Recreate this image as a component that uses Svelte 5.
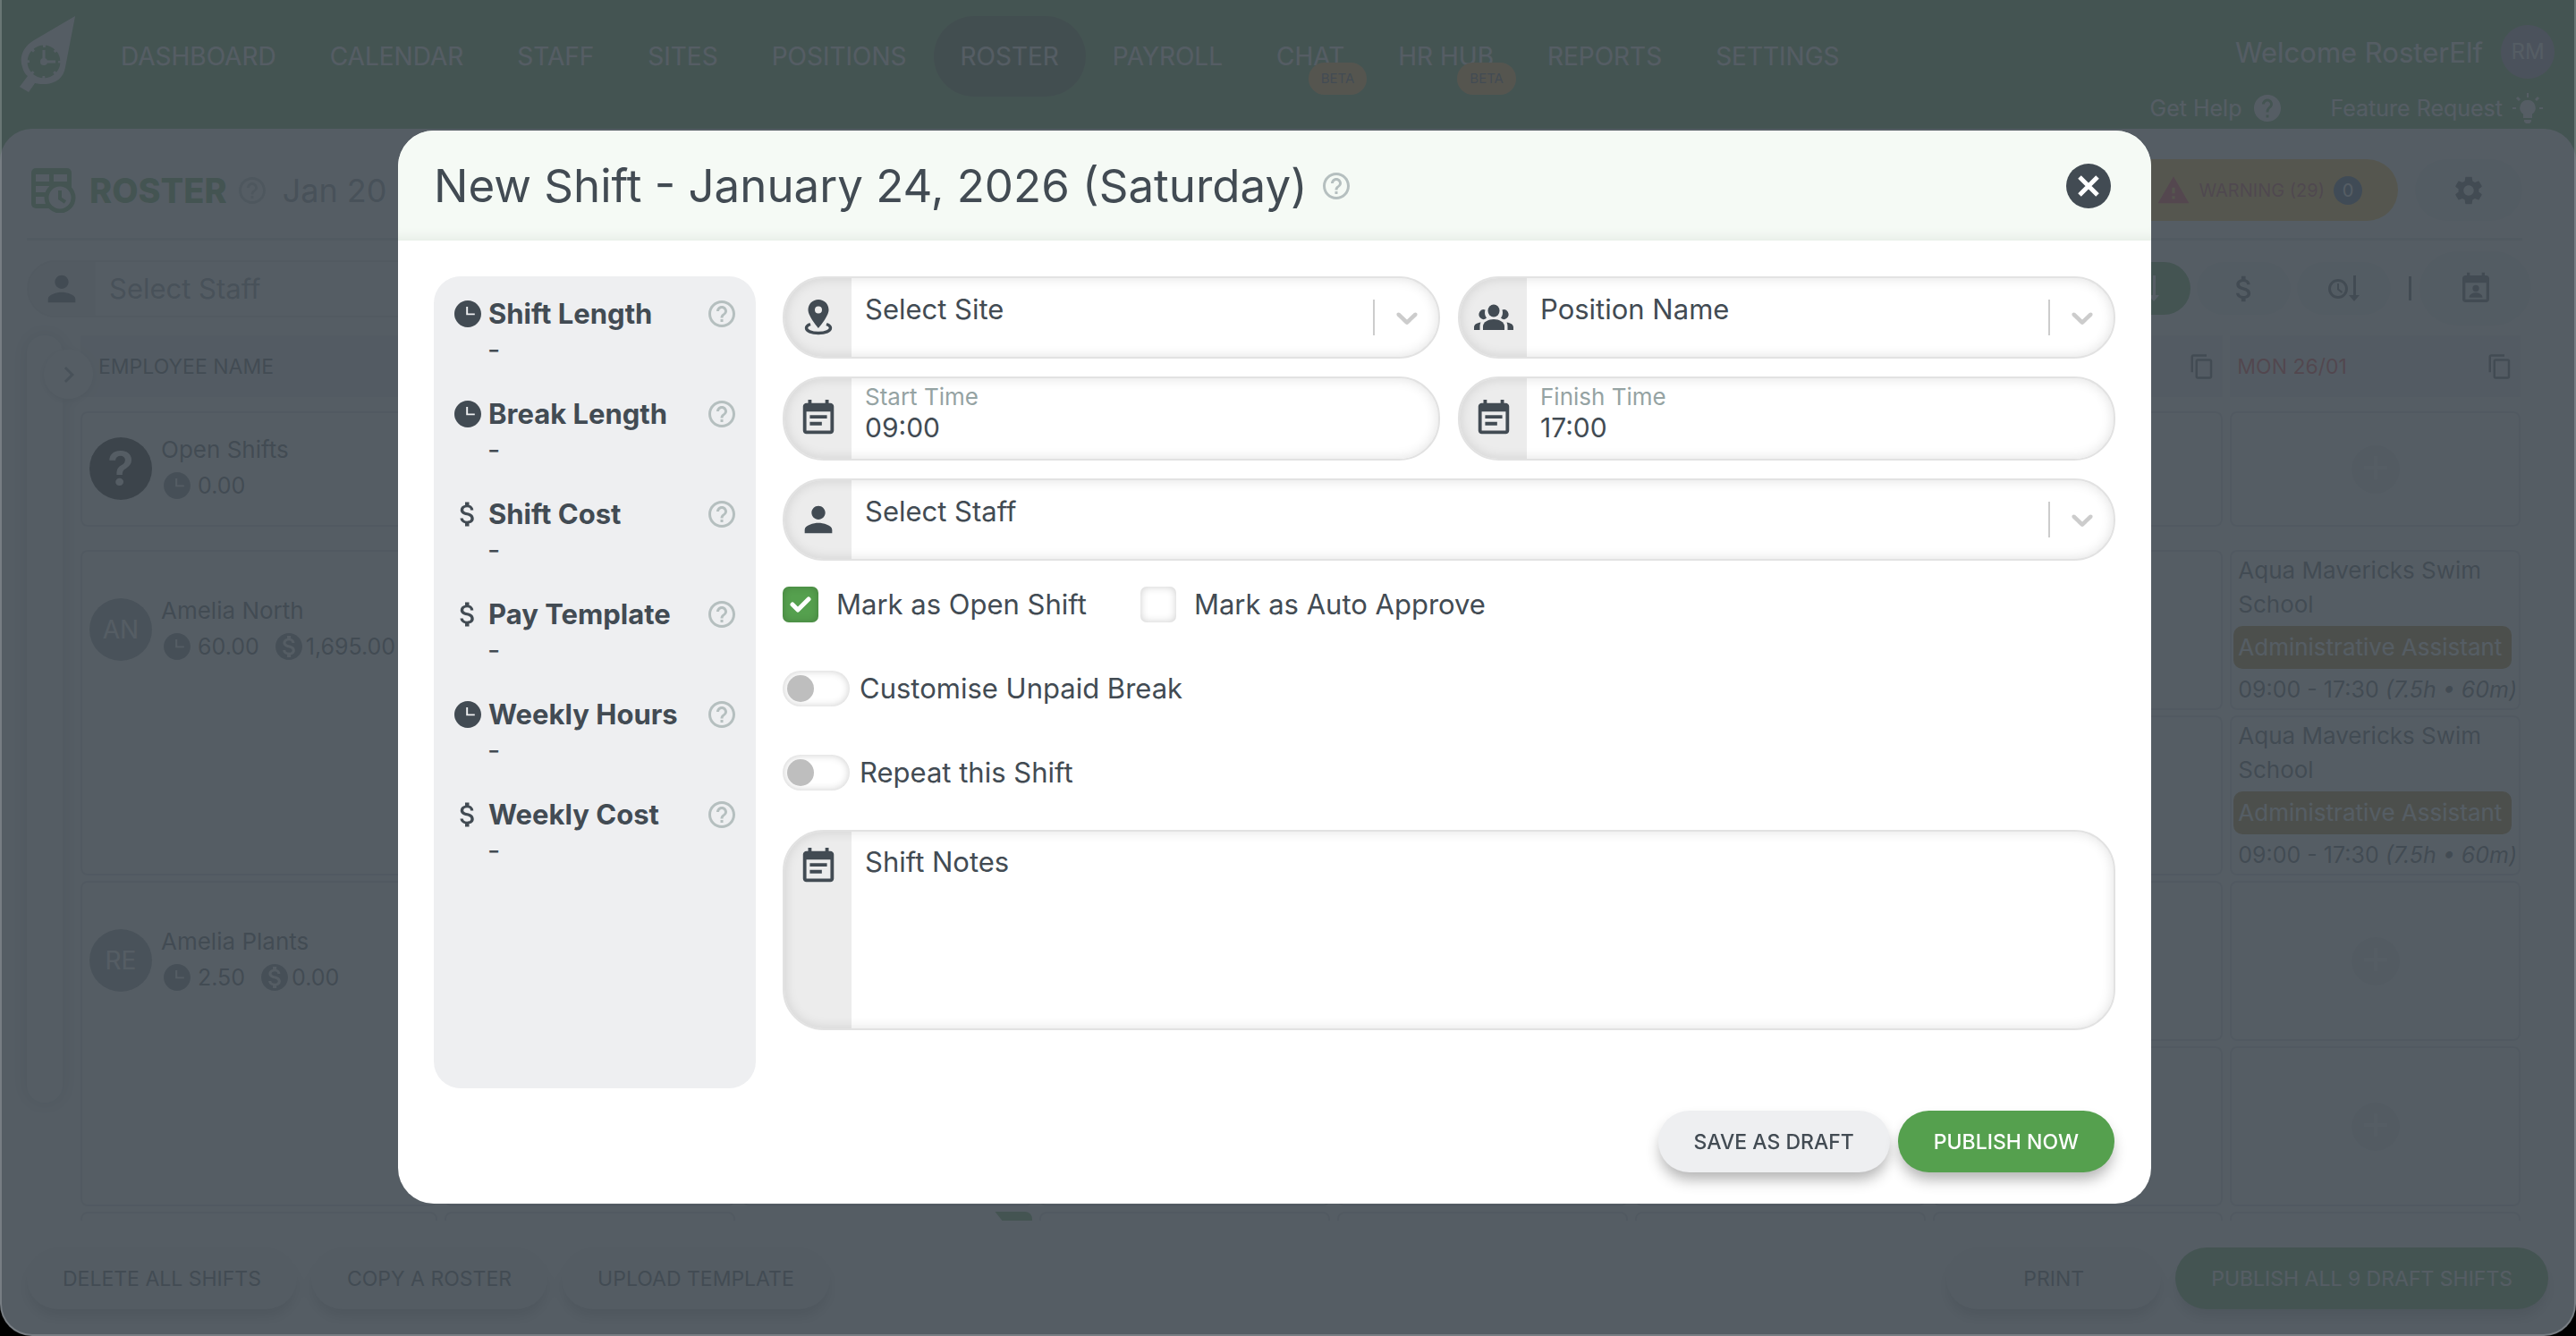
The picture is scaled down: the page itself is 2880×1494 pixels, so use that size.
<script>
  const icons = {
    help: "M11 18h2v-2h-2v2zm1-16C6.48 2 2 6.48 2 12s4.48 10 10 10 10-4.48 10-10S17.52 2 12 2zm0 18c-4.41 0-8-3.59-8-8s3.59-8 8-8 8 3.59 8 8-3.59 8-8 8zm0-14c-2.21 0-4 1.79-4 4h2c0-1.1.9-2 2-2s2 .9 2 2c0 2-3 1.75-3 5h2c0-2.25 3-2.5 3-5 0-2.21-1.79-4-4-4z",
    helpFilled: "M12 2C6.48 2 2 6.48 2 12s4.48 10 10 10 10-4.48 10-10S17.52 2 12 2zm1 17h-2v-2h2v2zm2.07-7.75l-.9.92C13.45 12.9 13 13.5 13 15h-2v-.5c0-1.1.45-2.1 1.17-2.83l1.24-1.26c.37-.36.59-.86.59-1.41 0-1.1-.9-2-2-2s-2 .9-2 2H8c0-2.21 1.79-4 4-4s4 1.79 4 4c0 .88-.36 1.68-.93 2.25z",
    clock: "M12 2C6.5 2 2 6.5 2 12s4.5 10 10 10 10-4.5 10-10S17.5 2 12 2zm5.2 10.9h-6.4V6.7h1.3v4.9h5.1z",
    dollar: "M11.8 10.9c-2.27-.59-3-1.2-3-2.15 0-1.09 1.01-1.85 2.7-1.85 1.78 0 2.44.85 2.5 2.1h2.21c-.07-1.72-1.12-3.3-3.21-3.81V3h-3v2.16c-1.94.42-3.5 1.68-3.5 3.61 0 2.31 1.91 3.46 4.7 4.13 2.5.6 3 1.48 3 2.41 0 .69-.49 1.79-2.7 1.79-2.06 0-2.87-.92-2.98-2.1h-2.2c.12 2.19 1.76 3.42 3.68 3.83V21h3v-2.15c1.95-.37 3.5-1.5 3.5-3.55 0-2.84-2.43-3.81-4.7-4.4z",
    money: "M12 2C6.48 2 2 6.48 2 12s4.48 10 10 10 10-4.48 10-10S17.52 2 12 2zm1.41 16.09V20h-2.67v-1.93c-1.71-.36-3.16-1.46-3.27-3.4h1.96c.1 1.05.82 1.87 2.65 1.87 1.96 0 2.4-.98 2.4-1.59 0-.83-.44-1.61-2.67-2.14-2.48-.6-4.18-1.62-4.18-3.67 0-1.72 1.39-2.84 3.11-3.21V4h2.67v1.95c1.86.45 2.79 1.86 2.85 3.39H14.3c-.05-1.11-.64-1.87-2.22-1.87-1.5 0-2.4.68-2.4 1.64 0 .84.65 1.39 2.67 1.91s4.18 1.39 4.18 3.91c-.01 1.83-1.38 2.83-3.12 3.16z",
    person: "M12 12c2.21 0 4-1.79 4-4s-1.79-4-4-4-4 1.79-4 4 1.79 4 4 4zm0 2c-2.67 0-8 1.34-8 4v2h16v-2c0-2.66-5.33-4-8-4z",
    note: "M17 10H7v2h10v-2zm2-7h-1V1h-2v2H8V1H6v2H5c-1.11 0-1.99.9-1.99 2L3 19c0 1.1.89 2 2 2h14c1.1 0 2-.9 2-2V5c0-1.1-.9-2-2-2zm0 16H5V8h14v11zm-5-5H7v2h7v-2z",
    contact: "M19 3h-1V1h-2v2H8V1H6v2H5c-1.11 0-2 .9-2 2v14c0 1.1.89 2 2 2h14c1.1 0 2-.9 2-2V5c0-1.1-.9-2-2-2zm0 16H5V8h14v11zM12 9.5a2.2 2.2 0 1 0 0 4.4 2.2 2.2 0 0 0 0-4.4zM7.5 17.8c0-2 2.4-3.2 4.5-3.2s4.5 1.2 4.5 3.2z",
    gear: "M19.14 12.94c.04-.3.06-.61.06-.94 0-.32-.02-.64-.07-.94l2.03-1.58c.18-.14.23-.41.12-.61l-1.92-3.32c-.12-.22-.37-.29-.59-.22l-2.39.96c-.5-.38-1.03-.7-1.62-.94l-.36-2.54c-.04-.24-.24-.41-.48-.41h-3.84c-.24 0-.43.17-.47.41l-.36 2.54c-.59.24-1.13.57-1.62.94l-2.39-.96c-.22-.08-.47 0-.59.22L2.74 8.87c-.12.21-.08.47.12.61l2.03 1.58c-.05.3-.09.63-.09.94s.02.64.07.94l-2.03 1.58c-.18.14-.23.41-.12.61l1.92 3.32c.12.22.37.29.59.22l2.39-.96c.5.38 1.03.7 1.62.94l.36 2.54c.05.24.24.41.48.41h3.84c.24 0 .44-.17.47-.41l.36-2.54c.59-.24 1.13-.56 1.62-.94l2.39.96c.22.08.47 0 .59-.22l1.92-3.32c.12-.22.07-.47-.12-.61l-2.01-1.58zM12 15.6c-1.98 0-3.6-1.62-3.6-3.6s1.62-3.6 3.6-3.6 3.6 1.62 3.6 3.6-1.62 3.6-3.6 3.6z",
    copy: "M16 1H4c-1.1 0-2 .9-2 2v14h2V3h12V1zm3 4H8c-1.1 0-2 .9-2 2v14c0 1.1.9 2 2 2h11c1.1 0 2-.9 2-2V7c0-1.1-.9-2-2-2zm0 16H8V7h11v14z",
    warning: "M1 21h22L12 2 1 21zm12-3h-2v-2h2v2zm0-4h-2v-4h2v4z",
    chevronRight: "M10 6L8.6 7.4 13.2 12l-4.6 4.6L10 18l6-6z",
  };

  const nav = [
    { label: "DASHBOARD" },
    { label: "CALENDAR" },
    { label: "STAFF" },
    { label: "SITES" },
    { label: "POSITIONS" },
    { label: "ROSTER", active: true },
    { label: "PAYROLL" },
    { label: "CHAT", beta: true },
    { label: "HR HUB", beta: true },
    { label: "REPORTS" },
    { label: "SETTINGS" },
  ];

  const days = ["", "", "", "", "", "", "MON 26/01"];

  const shift = {
    site: "Aqua Mavericks Swim School",
    position: "Administrative Assistant",
    time: "09:00 - 17:30",
    detail: "(7.5h • 60m)",
  };

  const staff = [
    { initials: "AN", name: "Amelia North", hours: "60.00", cost: "1,695.00", cells: [shift, shift] },
    { initials: "RE", name: "Amelia Plants", hours: "2.50", cost: "0.00", cells: [null, null] },
  ];

  const summary = [
    { icon: "clock", label: "Shift Length" },
    { icon: "clock", label: "Break Length" },
    { icon: "dollar", label: "Shift Cost" },
    { icon: "dollar", label: "Pay Template" },
    { icon: "clock", label: "Weekly Hours" },
    { icon: "dollar", label: "Weekly Cost" },
  ];

  let open = true;
  let startTime = "09:00";
  let finishTime = "17:00";
  let openShift = true;
  let autoApprove = false;
  let customBreak = false;
  let repeatShift = false;
  let notes = "";

  const close = () => {
    open = false;
  };
</script>

{#snippet icon(name, size)}
  <svg class="icon" width={size} height={size} viewBox="0 0 24 24" aria-hidden="true">
    <path d={icons[name]} />
  </svg>
{/snippet}

{#snippet indicator()}
  <span class="indicator">
    <svg width="40" height="40" viewBox="0 0 20 20" aria-hidden="true">
      <path d="M4.516 7.548c.436-.446 1.043-.481 1.576 0l3.908 3.747 3.908-3.747c.533-.481 1.141-.446 1.574 0 .436.445.408 1.197 0 1.615-.406.418-4.695 4.502-4.695 4.502-.217.223-.502.335-.787.335s-.57-.112-.789-.335c0 0-4.287-4.084-4.695-4.502s-.436-1.17 0-1.615z" />
    </svg>
  </span>
{/snippet}

{#snippet plus()}
  <button class="plus" aria-label="Add shift">
    <svg width="28" height="28" viewBox="0 0 28 28"><path d="M14 1v26M1 14h26" /></svg>
  </button>
{/snippet}

<div class="app">
  <header class="topbar">
    <a class="logo" href="#home" aria-label="Home">
      <svg width="62" height="86" viewBox="0 0 62 86">
        <path d="M62 0L16 27C4 34-1 46 3 57c1 4 3 8 6 10L0 79l10 6 7-10c4 1 8 1 12 1 12-1 20-7 22-19z" fill="#fff" />
        <circle cx="27" cy="51" r="18.5" fill="#55a04e" />
        <g stroke="#fff" stroke-width="3" fill="none">
          <path d="M27 51V38M27 51h13" />
          <circle cx="27" cy="51" r="18" stroke-dasharray="3 11.13" stroke-dashoffset="1.5" stroke-width="4" />
        </g>
        <circle cx="27" cy="51" r="4" fill="#fff" />
      </svg>
    </a>
    <nav>
      {#each nav as item}
        <a href="#{item.label}" class:active={item.active}>
          {item.label}
          {#if item.beta}<span class="beta">BETA</span>{/if}
        </a>
      {/each}
    </nav>
    <div class="account">
      <div class="welcome">
        <span>Welcome RosterElf</span>
        <span class="me">RM</span>
      </div>
      <div class="links">
        <a href="#help">Get Help {@render icon("helpFilled", 36)}</a>
        <a href="#feature">
          Feature Request
          <svg class="icon" width="34" height="34" viewBox="0 0 34 34" aria-hidden="true">
            <path d="M17 8a8.500 8.500 0 0 0-5 15.500V28h10v-4.500A8.500 8.500 0 0 0 17 8zM13 30h8v2l-2 2h-4l-2-2zM16 0h2v5h-2zM0 16h4v2H0zM30 16h4v2h-4zM4 6l2-2 3 3-2 2zM30 6l-2-2-3 3 2 2z" />
          </svg>
        </a>
      </div>
    </div>
  </header>

  <main>
    <div class="title-row">
      <svg width="50" height="50" viewBox="0 0 50 50" aria-hidden="true">
        <rect width="45" height="45" rx="5" fill="#55a04e" />
        <path d="M5 7h15v8H5zM25 7h15v8H25zM5 20h15v7H5zM5 32h12v8H5z" fill="#fff" />
        <circle cx="32" cy="33" r="15" fill="#fff" stroke="#55a04e" stroke-width="5" />
        <path d="M32 25v9l6 4" fill="none" stroke="#55a04e" stroke-width="4" />
      </svg>
      <h1>ROSTER</h1>
      <span class="hint">{@render icon("help", 36)}</span>
      <span class="range">Jan 20</span>
      <button class="warning">
        <span class="triangle">{@render icon("warning", 38)}</span>
        WARNING (29)
        <span class="count">0</span>
      </button>
      <button class="pill gear" aria-label="Settings">{@render icon("gear", 38)}</button>
    </div>

    <div class="tools">
      <label class="search">
        {@render icon("person", 46)}
        <input placeholder="Select Staff" aria-label="Select staff" />
      </label>
      <button class="pill small on" aria-label="Sort by name">
        <svg class="icon" width="36" height="30" viewBox="0 0 36 30"><path d="M28 0h3v22h4l-6 7-6-7h5z" /></svg>
      </button>
      <button class="pill small" aria-label="Sort by cost">{@render icon("dollar", 38)}</button>
      <button class="pill small" aria-label="Sort by hours">
        <svg class="icon" width="36" height="30" viewBox="0 0 36 30">
          <circle cx="11" cy="15" r="9.500" fill="none" stroke="#424b53" stroke-width="3" />
          <path d="M10 9h2v6l4 3-1 2-5-4zM28 0h3v22h4l-6 7-6-7h5z" />
        </svg>
      </button>
      <span class="bar"></span>
      <button class="pill big" aria-label="Staff calendar">{@render icon("contact", 40)}</button>
    </div>

    <div class="board">
      <div class="drawer">
        <button class="expand" aria-label="Expand">{@render icon("chevronRight", 36)}</button>
      </div>
      <div class="rows">
        <div class="row head">
          <div class="th">EMPLOYEE NAME</div>
          {#each days as day}
            <div class="th day">{day} {@render icon("copy", 30)}</div>
          {/each}
        </div>

        <div class="row open-row">
          <div class="cell employee">
            <span class="avatar unknown">?</span>
            <div>
              <div class="name">Open Shifts</div>
              <div class="stats">{@render icon("clock", 36)} 0.00</div>
            </div>
          </div>
          {#each days as day}
            <div class="cell">{@render plus()}</div>
          {/each}
        </div>

        {#each staff as person}
          <div class="row staff-row">
            <div class="cell employee">
              <span class="avatar">{person.initials}</span>
              <div>
                <div class="name">{person.name}</div>
                <div class="stats">
                  {@render icon("clock", 36)} {person.hours}
                  <span class="cost">{@render icon("money", 36)}{person.cost}</span>
                </div>
              </div>
            </div>
            {#each days as day, i}
              <div class="stack">
                {#each person.cells as item}
                  {#if item && i === days.length - 1}
                    <div class="cell shift">
                      <div class="site">{item.site}</div>
                      <div class="position">{item.position}</div>
                      <div class="time">{item.time} <i>{item.detail}</i></div>
                    </div>
                  {:else}
                    <div class="cell">{@render plus()}</div>
                  {/if}
                {/each}
              </div>
            {/each}
          </div>
        {/each}

        <div class="row last-row">
          <div class="cell"></div>
          {#each days as day, i}
            <div class="cell" class:flag={i === 1}></div>
          {/each}
        </div>
      </div>
    </div>
  </main>

  <footer class="actions">
    <button class="btn">DELETE ALL SHIFTS</button>
    <button class="btn">COPY A ROSTER</button>
    <button class="btn">UPLOAD TEMPLATE</button>
    <button class="btn print">PRINT</button>
    <button class="btn primary">PUBLISH ALL 9 DRAFT SHIFTS</button>
  </footer>
</div>

{#if open}
  <div class="overlay">
    <div class="modal" role="dialog" aria-modal="true" aria-labelledby="modal-title">
      <div class="modal-header">
        <h2 id="modal-title">New Shift - January 24, 2026 (Saturday)</h2>
        <span class="hint">{@render icon("help", 36)}</span>
        <button class="close" aria-label="Close" on:click={close}>
          <svg width="50" height="50" viewBox="0 0 50 50">
            <circle cx="25" cy="25" r="25" fill="#424b53" />
            <path d="M15 15l20 20M35 15L15 35" stroke="#fff" stroke-width="5" />
          </svg>
        </button>
      </div>

      <div class="modal-body">
        <aside>
          {#each summary as item}
            <div class="summary">
              <div class="summary-label">
                {@render icon(item.icon, 36)}
                <b>{item.label}</b>
                <span class="hint">{@render icon("help", 36)}</span>
              </div>
              <div class="summary-value">-</div>
            </div>
          {/each}
        </aside>

        <form>
          <div class="fields">
            <div class="field">
              <span class="field-icon">
                <svg class="icon" width="32" height="40" viewBox="0 0 32 40" aria-hidden="true">
                  <path fill-rule="evenodd" d="M16 0C9.500 0 4.500 5 4.500 11.500 4.500 19 16 32 16 32s11.500-13 11.500-20.500C27.500 5 22.500 0 16 0zm0 7.500a4 4 0 1 1 0 8 4 4 0 0 1 0-8z" />
                  <path d="M7 27.500c-3 1-4.500 2.600-4.500 4.300C2.500 35 8 37.500 16 37.500s13.500-2.500 13.500-5.700c0-1.700-1.500-3.300-4.500-4.300" fill="none" stroke="#424b53" stroke-width="3.400" />
                </svg>
              </span>
              <select aria-label="Site"><option>Select Site</option></select>
              {@render indicator()}
            </div>
            <div class="field">
              <span class="field-icon">
                <svg class="icon" width="46" height="30" viewBox="0 0 46 30" aria-hidden="true">
                  <ellipse cx="23" cy="7.500" rx="6.500" ry="7" />
                  <path d="M11 29v-4c0-5 6-8 12-8s12 3 12 8v4z" />
                  <path d="M13.500 6.500a5 5.500 0 1 0 1.500 9c-2-2.500-2.500-6-1.500-9zM32.500 6.500a5 5.500 0 1 1-1.500 9c2-2.500 2.500-6 1.500-9zM8.500 20.500C4 21 1 23 1 26v3h6.500v-3.500c0-2 .3-3.500 1-5zM37.500 20.500c4.500.5 7.500 2.500 7.500 5.500v3h-6.500v-3.500c0-2-.3-3.500-1-5z" />
                </svg>
              </span>
              <select aria-label="Position"><option>Position Name</option></select>
              {@render indicator()}
            </div>
            <div class="field time-field">
              <span class="field-icon">{@render icon("note", 46)}</span>
              <div class="timebox">
                <label for="start">Start Time</label>
                <input id="start" type="text" bind:value={startTime} />
              </div>
            </div>
            <div class="field time-field">
              <span class="field-icon">{@render icon("note", 46)}</span>
              <div class="timebox">
                <label for="finish">Finish Time</label>
                <input id="finish" type="text" bind:value={finishTime} />
              </div>
            </div>
            <div class="field wide">
              <span class="field-icon">{@render icon("person", 46)}</span>
              <select aria-label="Staff"><option>Select Staff</option></select>
              {@render indicator()}
            </div>
          </div>

          <div class="options">
            <div class="checks">
              <label class="check">
                <input type="checkbox" bind:checked={openShift} />
                <svg width="24" height="20" viewBox="0 0 24 20" aria-hidden="true"><path d="M3 10l6 6L21 4" /></svg>
                <span>Mark as Open Shift</span>
              </label>
              <label class="check">
                <input type="checkbox" bind:checked={autoApprove} />
                <svg width="24" height="20" viewBox="0 0 24 20" aria-hidden="true"><path d="M3 10l6 6L21 4" /></svg>
                <span>Mark as Auto Approve</span>
              </label>
            </div>
            <label class="toggle">
              <input type="checkbox" role="switch" bind:checked={customBreak} />
              <span>Customise Unpaid Break</span>
            </label>
            <label class="toggle">
              <input type="checkbox" role="switch" bind:checked={repeatShift} />
              <span>Repeat this Shift</span>
            </label>
          </div>

          <div class="field notes">
            <span class="field-icon">{@render icon("note", 46)}</span>
            <textarea placeholder="Shift Notes" aria-label="Shift Notes" bind:value={notes}></textarea>
          </div>
        </form>
      </div>

      <div class="modal-footer">
        <button class="btn">SAVE AS DRAFT</button>
        <button class="btn primary">PUBLISH NOW</button>
      </div>
    </div>
  </div>
{/if}

<div class="frame"></div>

<style>
  :global(body) {
    background: #000;
  }
  :global(*) {
    box-sizing: border-box;
  }
  .app,
  .overlay {
    font-family: Inter, "Open Sans", sans-serif;
    color: #424b53;
  }
  button,
  input,
  select,
  textarea {
    font-family: inherit;
    color: inherit;
  }
  button {
    border: 0;
    padding: 0;
    cursor: pointer;
  }
  a {
    color: inherit;
    text-decoration: none;
  }
  .icon {
    fill: currentColor;
    flex: none;
    display: block;
  }
  .hint {
    color: #b5bfbf;
  }

  .app {
    height: 100vh;
    display: flex;
    flex-direction: column;
    overflow: hidden;
    background: #55a04e;
  }
  .topbar {
    flex: none;
    height: 144px;
    display: flex;
    align-items: flex-start;
    padding: 18px 24px 0 22px;
    color: #fff;
  }
  .logo {
    margin-right: 21px;
  }
  nav {
    display: flex;
    flex: 1;
  }
  nav a {
    position: relative;
    height: 90px;
    padding: 0 30px;
    border-radius: 45px;
    display: flex;
    align-items: center;
    font-size: 28px;
  }
  nav a.active {
    background: #436935;
  }
  .beta {
    position: absolute;
    top: 52px;
    right: 5px;
    height: 36px;
    padding: 0 14px;
    border-radius: 18px;
    background: #ffac30;
    color: #424b53;
    font-size: 15px;
    line-height: 36px;
  }
  .account {
    padding-top: 10px;
  }
  .welcome,
  .links,
  .links a {
    display: flex;
    align-items: center;
    justify-content: flex-end;
  }
  .welcome {
    gap: 20px;
    font-size: 31px;
  }
  .me {
    width: 60px;
    height: 60px;
    border-radius: 50%;
    background: #9c8cac;
    font-size: 24px;
    line-height: 60px;
    text-align: center;
  }
  .links {
    margin-top: 15px;
    padding-right: 13px;
    gap: 52px;
    font-size: 25px;
  }
  .links a {
    gap: 11px;
  }

  main {
    flex: 1;
    min-height: 0;
    display: flex;
    flex-direction: column;
    padding: 34px 60px 0 30px;
    border-radius: 36px 36px 0 0;
    background: #fff;
    overflow: hidden;
  }
  .title-row {
    flex: none;
    display: flex;
    align-items: center;
    padding: 0 0 19px 5px;
    border-bottom: 3px solid #d8dadd;
  }
  h1 {
    margin: 0 10px 0 15px;
    color: #55a04e;
    font-size: 38px;
    line-height: 50px;
    font-weight: 800;
  }
  .range {
    flex: 1;
    margin-left: 16px;
    font-size: 36px;
    color: #7a858c;
  }
  .warning {
    height: 69px;
    display: flex;
    align-items: center;
    gap: 10px;
    padding: 0 40px;
    border-radius: 35px;
    background: #ffb92b;
    color: #c02c30;
    font-size: 20px;
  }
  .triangle {
    color: #f02030;
  }
  .count {
    width: 32px;
    height: 32px;
    border-radius: 50%;
    background: #2c4a70;
    color: #fff;
    line-height: 32px;
  }
  .pill {
    display: flex;
    align-items: center;
    justify-content: center;
    background: #eceef0;
  }
  .gear {
    width: 120px;
    height: 69px;
    margin-left: 19px;
    border-radius: 35px;
  }
  .tools {
    flex: none;
    display: flex;
    align-items: center;
    gap: 7px;
    padding: 12px 0 11px;
    margin-right: -10px;
  }
  .search {
    width: 600px;
    height: 64px;
    margin-right: auto;
    display: flex;
    align-items: center;
    gap: 30px;
    padding-left: 14px;
    border: 2px solid #dcdee0;
    border-radius: 32px;
    background: linear-gradient(to right, #e8e9ea 75px, #fff 75px);
  }
  .search input {
    flex: 1;
    border: 0;
    background: none;
    padding: 0;
    font-size: 31px;
  }
  .search input::placeholder {
    color: #7a858c;
  }
  .small {
    width: 105px;
    height: 59px;
    border-radius: 30px;
  }
  .on {
    background: #55a04e;
    color: #fff;
  }
  .bar {
    width: 3px;
    height: 27px;
    margin: 0 2px 0 13px;
    background: #424b53;
  }
  .big {
    width: 125px;
    height: 83px;
    border-radius: 42px;
  }

  .board {
    flex: 1;
    min-height: 0;
    display: flex;
    gap: 20px;
    margin-right: 2px;
  }
  .drawer {
    position: relative;
    flex: none;
    width: 40px;
    height: 858px;
    border-radius: 20px;
    box-shadow: 0 0 20px 4px #c8cbce;
  }
  .expand {
    position: absolute;
    top: 16px;
    left: 19px;
    width: 55px;
    height: 55px;
    display: flex;
    align-items: center;
    justify-content: center;
    border-radius: 50%;
    background: #fff;
    color: #7a858c;
    box-shadow: 0 2px 8px #c0c3c6;
  }
  .rows {
    flex: 1;
    min-width: 0;
    display: flex;
    flex-direction: column;
    gap: 6px;
  }
  .row {
    display: grid;
    grid-template-columns: 399px repeat(7, minmax(0, 1fr));
    gap: 8px;
    flex: none;
  }
  .th {
    height: 69px;
    padding: 0 12px 0 20px;
    display: flex;
    align-items: center;
    background: #e9ebed;
    font-size: 23px;
  }
  .day {
    justify-content: space-between;
    padding: 0 8px;
    color: #dc1e28;
  }
  .day .icon {
    margin-left: auto;
    color: #424b53;
  }
  .head {
    margin-bottom: 10px;
  }
  .open-row {
    min-height: 129px;
    margin-bottom: 20px;
  }
  .staff-row {
    min-height: 364px;
  }
  .last-row {
    min-height: 200px;
  }
  .cell {
    border: 2px solid #d4d7da;
    border-radius: 8px;
    display: flex;
    align-items: center;
    justify-content: center;
  }
  .stack {
    display: grid;
    grid-template-rows: 1fr 1fr;
    gap: 6px;
  }
  .employee {
    align-items: flex-start;
    justify-content: flex-start;
    gap: 10px;
    padding: 21px 0 0 8px;
  }
  .staff-row .employee {
    padding-top: 46px;
  }
  .avatar {
    width: 70px;
    height: 70px;
    margin-top: 6px;
    border-radius: 50%;
    background: #868e96;
    color: #fff;
    font-size: 28px;
    line-height: 70px;
    text-align: center;
  }
  .unknown {
    background: #000;
    font-size: 54px;
    font-weight: 600;
  }
  .name {
    font-size: 26px;
    line-height: 40px;
  }
  .stats {
    font-size: 25px;
    line-height: 40px;
  }
  .stats,
  .cost {
    display: flex;
    align-items: center;
    gap: 5px;
  }
  .stats .icon {
    color: #6b757c;
  }
  .cost {
    margin-left: 10px;
    gap: 1px;
  }
  .shift {
    display: block;
    padding: 2px;
    font-size: 26px;
    line-height: 38px;
  }
  .site,
  .time {
    padding-left: 5px;
  }
  .site {
    margin-bottom: 5px;
  }
  .time {
    font-size: 25px;
    white-space: nowrap;
  }
  .position {
    width: 311px;
    height: 48px;
    padding-left: 5px;
    margin-bottom: 4px;
    border-radius: 10px;
    background: #a7730d;
    color: #fff;
    line-height: 48px;
    white-space: nowrap;
  }
  .plus {
    width: 54px;
    height: 54px;
    border-radius: 50%;
    background: #e6e8ea;
  }
  .plus path {
    stroke: #fff;
    stroke-width: 4;
  }
  .flag {
    align-items: flex-start;
    justify-content: flex-end;
    border-width: 0;
  }
  .flag::before {
    content: "";
    width: 42px;
    height: 30px;
    border-radius: 0 8px 0 0;
    background: #55a04e;
    clip-path: polygon(0 0, 100% 0, 100% 100%, 24px 100%);
  }

  .actions {
    flex: none;
    height: 129px;
    display: flex;
    align-items: flex-start;
    gap: 16px;
    padding: 30px 31px 0 30px;
    background: #fff;
  }
  .btn {
    height: 69px;
    padding: 0 40px;
    border-radius: 35px;
    background: #eeeff1;
    box-shadow: 0 10px 16px -2px rgba(0, 0, 0, 0.3);
    font-size: 23px;
    font-weight: 500;
    white-space: nowrap;
  }
  .actions .btn {
    font-weight: 400;
  }
  .btn.primary {
    background: #55a04e;
    color: #fff;
  }
  .print {
    margin-left: auto;
    padding: 0 86px;
  }

  .overlay {
    position: fixed;
    inset: 0;
    display: flex;
    justify-content: center;
    align-items: flex-start;
    padding: 146px 30px 0 0;
    background: rgba(67, 75, 83, 0.9);
    overflow: auto;
  }
  .modal {
    width: 100%;
    max-width: 1960px;
    border-radius: 40px;
    background: #fff;
    overflow: hidden;
  }
  .modal-header {
    display: flex;
    align-items: center;
    height: 123px;
    padding: 0 45px 0 40px;
    background: #f5faf5;
    box-shadow: inset 0 -14px 12px -10px #e6ede6;
  }
  h2 {
    margin: 0 14px 0 0;
    font-size: 51px;
    font-weight: 400;
    line-height: 60px;
  }
  .close {
    width: 50px;
    height: 50px;
    margin-left: auto;
    background: none;
  }
  .close svg {
    display: block;
  }
  .modal-body {
    display: flex;
    gap: 30px;
    padding: 40px 40px 0;
  }
  aside {
    flex: none;
    width: 360px;
    min-height: 908px;
    display: flex;
    flex-direction: column;
    gap: 36px;
    padding: 24px 20px;
    border-radius: 30px;
    background: #eeeff1;
  }
  .summary-label {
    display: flex;
    align-items: center;
    gap: 5px;
    margin-bottom: 4px;
    font-size: 31px;
    line-height: 36px;
    white-space: nowrap;
  }
  .summary-label .hint {
    margin-left: auto;
  }
  .summary-value {
    padding-left: 40px;
    font-size: 31px;
    line-height: 36px;
  }
  form {
    flex: 1;
    min-width: 0;
  }
  .fields {
    display: grid;
    grid-template-columns: 1fr 1fr;
    gap: 20px;
  }
  .field {
    height: 92px;
    display: flex;
    align-items: center;
    border: 2px solid #e2e2e2;
    border-radius: 46px;
    background: linear-gradient(to right, #ececec 75px, #fff 75px);
    box-shadow: inset 0 0 14px rgba(0, 0, 0, 0.12);
    overflow: hidden;
  }
  .time-field {
    height: 94px;
  }
  .wide {
    grid-column: 1 / -1;
  }
  .field-icon {
    flex: none;
    width: 75px;
    display: flex;
    justify-content: center;
  }
  select {
    flex: 1;
    min-width: 0;
    height: 100%;
    padding: 0 0 20px 15px;
    border: 0;
    background: none;
    appearance: none;
    font-size: 31px;
  }
  .indicator {
    width: 73px;
    height: 40px;
    border-left: 2px solid #ccc;
    display: flex;
    justify-content: center;
    pointer-events: none;
  }
  .indicator path {
    fill: #ccc;
  }
  .timebox {
    flex: 1;
    display: flex;
    flex-direction: column;
    padding: 0 15px 12px;
  }
  .timebox label {
    color: #95a3a3;
    font-size: 26px;
    line-height: 32px;
  }
  .timebox input {
    height: 36px;
    padding: 0;
    border: 0;
    background: none;
    font-size: 30px;
  }
  .options {
    display: flex;
    flex-direction: column;
    gap: 54px;
    padding: 29px 0 44px;
    font-size: 31px;
    line-height: 40px;
  }
  .checks {
    display: flex;
    gap: 60px;
  }
  .check {
    display: grid;
    grid-template-columns: 40px auto;
    column-gap: 20px;
  }
  .check input {
    grid-area: 1 / 1;
    width: 40px;
    height: 40px;
    margin: 0;
    appearance: none;
    border-radius: 7px;
    background: #fff;
    box-shadow: inset 0 0 10px rgba(0, 0, 0, 0.2);
  }
  .check input:checked {
    background: #55a04e;
  }
  .check svg {
    grid-area: 1 / 1;
    place-self: center;
    visibility: hidden;
  }
  .check input:checked + svg {
    visibility: visible;
  }
  .check path {
    fill: none;
    stroke: #fff;
    stroke-width: 5;
    stroke-linecap: round;
    stroke-linejoin: round;
  }
  .toggle {
    display: flex;
    align-items: center;
    gap: 11px;
  }
  .toggle input {
    width: 75px;
    height: 40px;
    margin: 0;
    padding: 5px;
    appearance: none;
    border-radius: 20px;
    background: #fff;
    box-shadow: inset 0 0 10px rgba(0, 0, 0, 0.2);
  }
  .toggle input::before {
    content: "";
    display: block;
    width: 30px;
    height: 30px;
    border-radius: 50%;
    background: #bebebe;
  }
  .toggle input:checked::before {
    margin-left: auto;
    background: #55a04e;
  }
  .notes {
    height: 224px;
    align-items: flex-start;
  }
  .notes .field-icon {
    padding-top: 16px;
  }
  textarea {
    flex: 1;
    align-self: stretch;
    padding: 14px 15px;
    border: 0;
    background: none;
    resize: none;
    font-size: 31px;
    line-height: 40px;
  }
  textarea::placeholder {
    color: #424b53;
  }
  .modal-footer {
    display: flex;
    justify-content: flex-end;
    gap: 9px;
    padding: 25px 41px 35px;
  }

  /* window edge on top of everything */
  .frame {
    position: fixed;
    inset: -2px 0 0;
    border: 2px solid rgba(255, 255, 255, 0.2);
    border-radius: 0 0 36px 36px;
    box-shadow: 0 0 0 60px #000;
    pointer-events: none;
  }
</style>
